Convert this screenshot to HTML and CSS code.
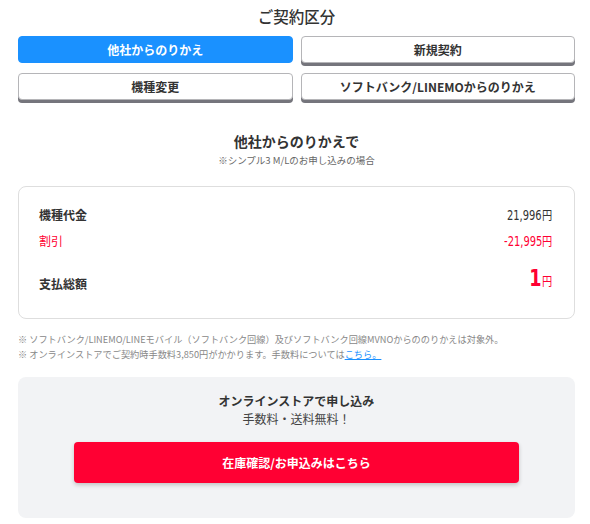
FILE: index.html
```html
<!DOCTYPE html>
<html lang="ja">
<head>
<meta charset="utf-8">
<link rel="stylesheet" href="styles.css">
</head>
<body>
<div class="page">
  <h2 class="title">ご契約区分</h2>
  <div class="tabs">
    <button class="tab active">他社からのりかえ</button>
    <button class="tab">新規契約</button>
    <button class="tab">機種変更</button>
    <button class="tab">ソフトバンク/LINEMOからのりかえ</button>
  </div>

  <div class="section-head">
    <h3 class="section-title">他社からのりかえで</h3>
    <p class="section-sub">※シンプル3 M/Lのお申し込みの場合</p>
  </div>

  <div class="card">
    <div class="row">
      <span class="label">機種代金</span>
      <span class="value"><span class="num">21,996</span><span class="yen">円</span></span>
    </div>
    <div class="row discount">
      <span class="label">割引</span>
      <span class="value"><span class="num">-21,995</span><span class="yen">円</span></span>
    </div>
    <div class="row total">
      <span class="label">支払総額</span>
      <span class="value"><span class="big">1</span><span class="yen">円</span></span>
    </div>
  </div>

  <div class="notes">
    <p>※ ソフトバンク/LINEMO/LINEモバイル（ソフトバンク回線）及びソフトバンク回線MVNOからののりかえは対象外。</p>
    <p>※ オンラインストアでご契約時手数料3,850円がかかります。手数料については<a href="#" class="link">こちら。</a></p>
  </div>

  <div class="apply">
    <p class="apply-title">オンラインストアで申し込み</p>
    <p class="apply-sub">手数料・送料無料！</p>
    <button class="cta">在庫確認/お申込みはこちら</button>
  </div>
</div>
</body>
</html>
```

FILE: styles.css
```css
* { box-sizing: border-box; }
html, body { margin: 0; padding: 0; background: #fff; }
body {
  font-family: "Noto Sans CJK JP", "Noto Sans", sans-serif;
  color: #333;
}
p, h2, h3 { margin: 0; }
.page { padding: 0 15px 0 18px; }

.title {
  font-size: 15.5px;
  font-weight: 500;
  text-align: center;
  line-height: 20px;
  padding-top: 6px;
  color: #333;
}

.tabs {
  display: grid;
  grid-template-columns: 1fr 1fr;
  column-gap: 8px;
  row-gap: 10px;
  margin-top: 10px;
}
.tab {
  font-family: inherit;
  font-size: 12px;
  font-weight: 700;
  color: #333;
  height: 27px;
  background: #fff;
  border: 1px solid #b5b5b8;
  border-radius: 4px;
  box-shadow: 0 3px 0 #75757c;
  padding: 0;
  line-height: 25px;
}
.tab.active {
  background: #1a91ff;
  border-color: #1a91ff;
  color: #fff;
  box-shadow: none;
}

.section-head {
  text-align: center;
  margin-top: 31px;
}
.section-title {
  font-size: 14px;
  font-weight: 700;
  line-height: 20px;
  color: #333;
}
.section-sub {
  font-size: 9.5px;
  color: #666;
  line-height: 14px;
  margin-top: 2px;
}

.card {
  margin-top: 19px;
  border: 1px solid #dedede;
  border-radius: 8px;
  padding: 19px 20px 23px 20px;
}
.row {
  display: flex;
  justify-content: space-between;
  align-items: flex-end;
  line-height: 18px;
}
.row + .row { margin-top: 8px; }
.label {
  font-size: 12px;
  font-weight: 700;
  color: #333;
}
.value {
  display: flex;
  align-items: baseline;
}
.num {
  font-family: "DejaVu Sans", sans-serif;
  font-stretch: condensed;
  font-size: 14.5px;
  display: inline-block;
  transform: scaleX(0.76);
  transform-origin: right;
  margin-left: -20px;
}
.yen {
  font-size: 12px;
  font-weight: 400;
  display: inline-block;
  transform: scaleX(0.85);
  transform-origin: left;
}
.discount .label, .discount .value { color: #ff0033; font-weight: 400; }
.row.total { margin-top: 15px; }
.total .label { line-height: 22px; }
.big {
  font-family: "DejaVu Sans", sans-serif;
  font-stretch: condensed;
  font-weight: 700;
  font-size: 23px;
  line-height: 26px;
  color: #ff0033;
  display: inline-block;
  transform: scaleX(0.85);
  transform-origin: right;
  margin-right: 1px;
}
.total .value { margin-bottom: 4px; }
.total .yen { color: #ff0033; }

.notes {
  margin-top: 13px;
  font-size: 9.2px;
  color: #888;
  line-height: 15px;
}
.link { color: #1a91ff; }

.apply {
  margin-top: 15px;
  background: #f2f3f5;
  border-radius: 8px;
  padding: 15px 0 35px;
  text-align: center;
}
.apply-title {
  font-size: 12px;
  font-weight: 700;
  line-height: 18px;
  color: #333;
}
.apply-sub {
  font-size: 12px;
  line-height: 18px;
  color: #444;
}
.cta {
  display: block;
  width: 80%;
  margin: 14px auto 0;
  height: 41px;
  background: #ff0033;
  color: #fff;
  border: none;
  border-radius: 4px;
  font-family: inherit;
  font-size: 12px;
  font-weight: 700;
  box-shadow: 0 2px 4px rgba(0,0,0,0.2);
}
```
